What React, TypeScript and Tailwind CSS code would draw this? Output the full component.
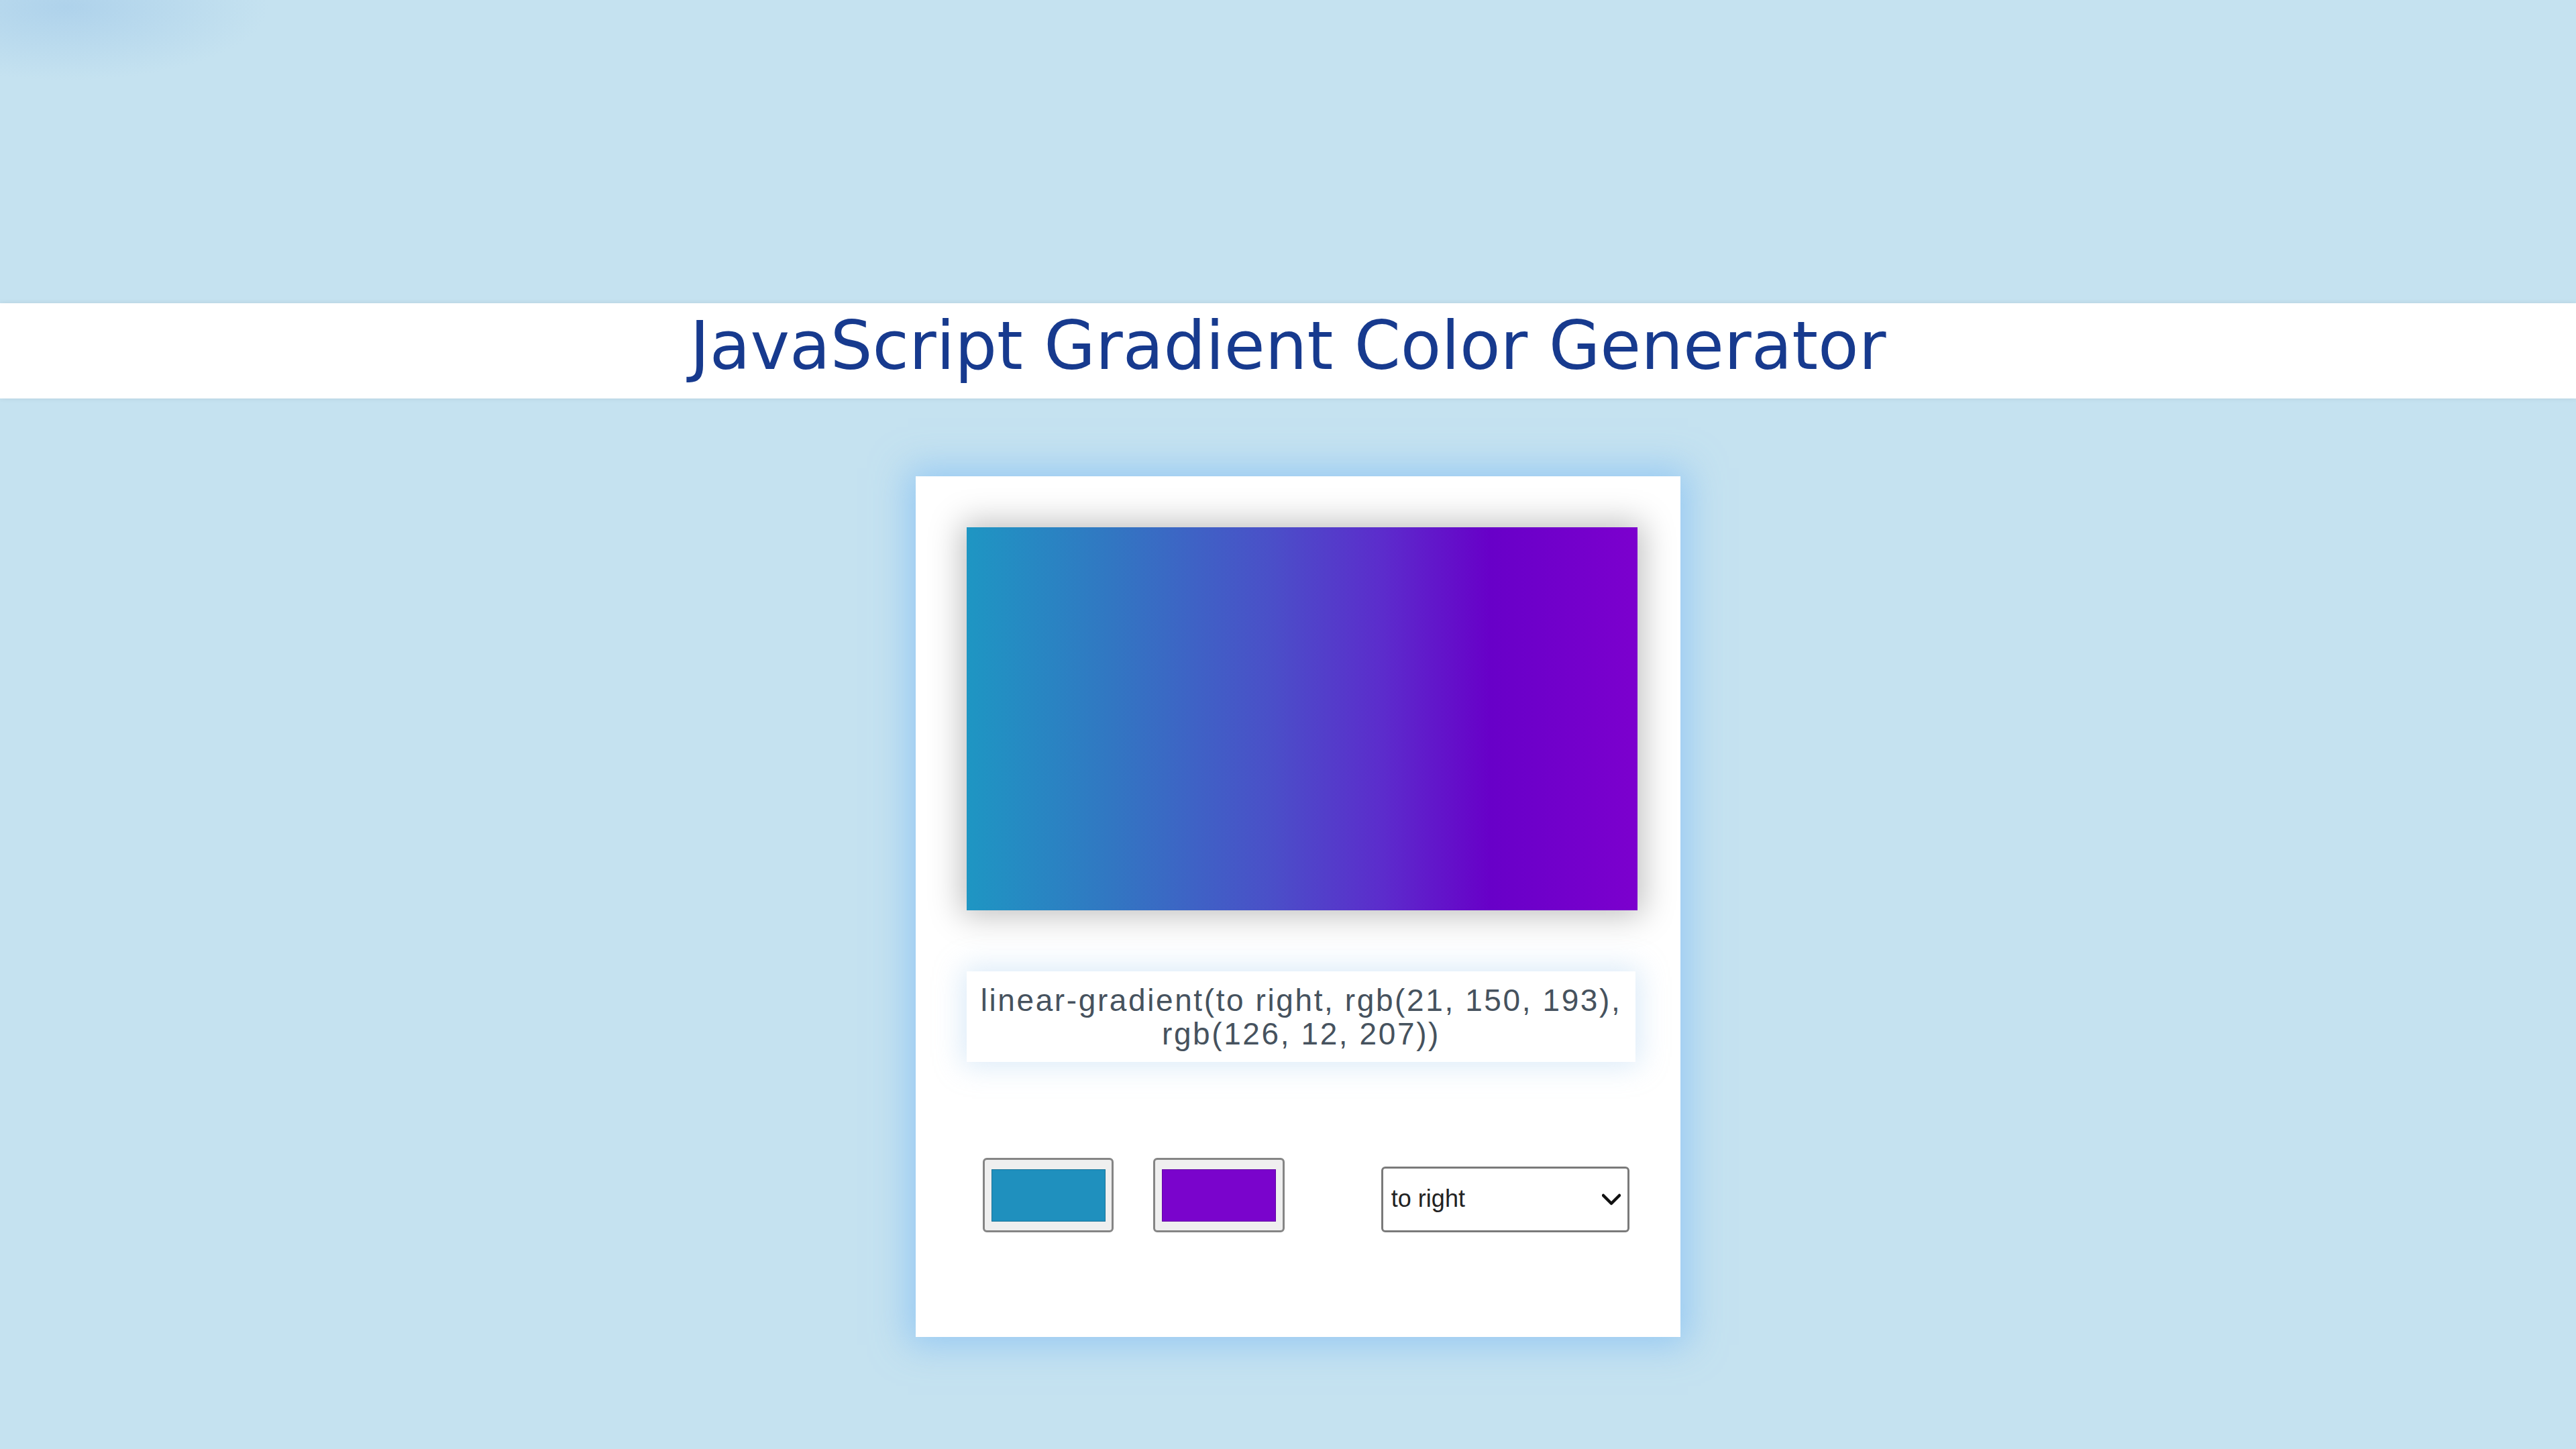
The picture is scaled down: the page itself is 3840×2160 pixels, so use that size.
import React, { useState } from 'react';

const directions = ['to right', 'to left', 'to top', 'to bottom'];

const toRgb = (hex: string) => {
  const n = parseInt(hex.slice(1), 16);
  return `rgb(${(n >> 16) & 255}, ${(n >> 8) & 255}, ${n & 255})`;
};

const ColorSwatch: React.FC<{ color: string; className?: string }> = ({ color, className }) => (
  <div
    className={`w-[197px] h-[111px] rounded-[6px] border-[3px] border-[#858585] bg-[#efefef] flex items-center justify-center ${className ?? ''}`}
  >
    <div className="w-[170px] h-[78px] border border-black/20" style={{ background: color }} />
  </div>
);

const App: React.FC = () => {
  const [colorA] = useState('#1596c1');
  const [colorB] = useState('#7e0ccf');
  const [direction] = useState(directions[0]);

  const css = `linear-gradient(${direction}, ${toRgb(colorA)}, ${toRgb(colorB)})`;

  return (
    <div className="w-full h-[2160px] bg-[#c5e2f0] bg-[radial-gradient(ellipse_300px_110px_at_100px_10px,rgba(160,200,232,0.6),transparent)] pt-[452px] font-['Liberation_Sans',Arial,sans-serif]">
      <header className="h-[142px] bg-white flex items-center justify-center shadow-[0_0_8px_rgba(0,0,0,0.08)]">
        <h1 className="text-[99px] leading-none text-[#173a8e] font-['DejaVu_Sans',Verdana,sans-serif] pb-[16px]">
          JavaScript Gradient Color Generator
        </h1>
      </header>

      <div className="flex justify-center pl-[30px]">
        <div className="mt-[116px] w-[1140px] h-[1283px] bg-white shadow-[0_0_50px_12px_rgba(120,185,245,0.6)] pt-[76px] px-[76px]">
          {/* preview */}
          <div
            className="w-[1000px] h-[571px] shadow-[0_0_45px_8px_rgba(0,0,0,0.25)]"
            style={{
              background:
                'linear-gradient(to right, rgb(30,150,195) 0%, rgb(50,118,194) 22%, rgb(74,80,200) 45%, rgb(92,44,204) 62%, rgb(104,0,200) 78%, rgb(124,0,206) 100%)',
            }}
          />

          {/* css output */}
          <div className="mt-[91px] w-[997px] h-[135px] bg-white shadow-[0_0_40px_6px_rgba(150,195,235,0.35)] flex items-center justify-center px-[16px]">
            <p className="text-center text-[46px] leading-[50px] tracking-[2.6px] text-[#46525e]">{css}</p>
          </div>

          {/* controls */}
          <div className="mt-[143px] flex items-end">
            <ColorSwatch color="#1f90be" className="ml-[24px]" />
            <ColorSwatch color="#7a04cc" className="ml-[59px]" />
            <div className="ml-[144px] w-[373px] h-[98px] rounded-[6px] border-[3px] border-[#7a7a7a] bg-white flex items-center justify-between pl-[12px] pr-[10px]">
              <span className="text-[36px] text-[#222] pb-[2px]">{direction}</span>
              <svg width="28" height="18" viewBox="0 0 28 18" fill="none">
                <polyline points="2,3 14,15 26,3" stroke="#111" strokeWidth="4.5" strokeLinecap="round" strokeLinejoin="round" />
              </svg>
            </div>
          </div>
        </div>
      </div>
    </div>
  );
};

export default App;
